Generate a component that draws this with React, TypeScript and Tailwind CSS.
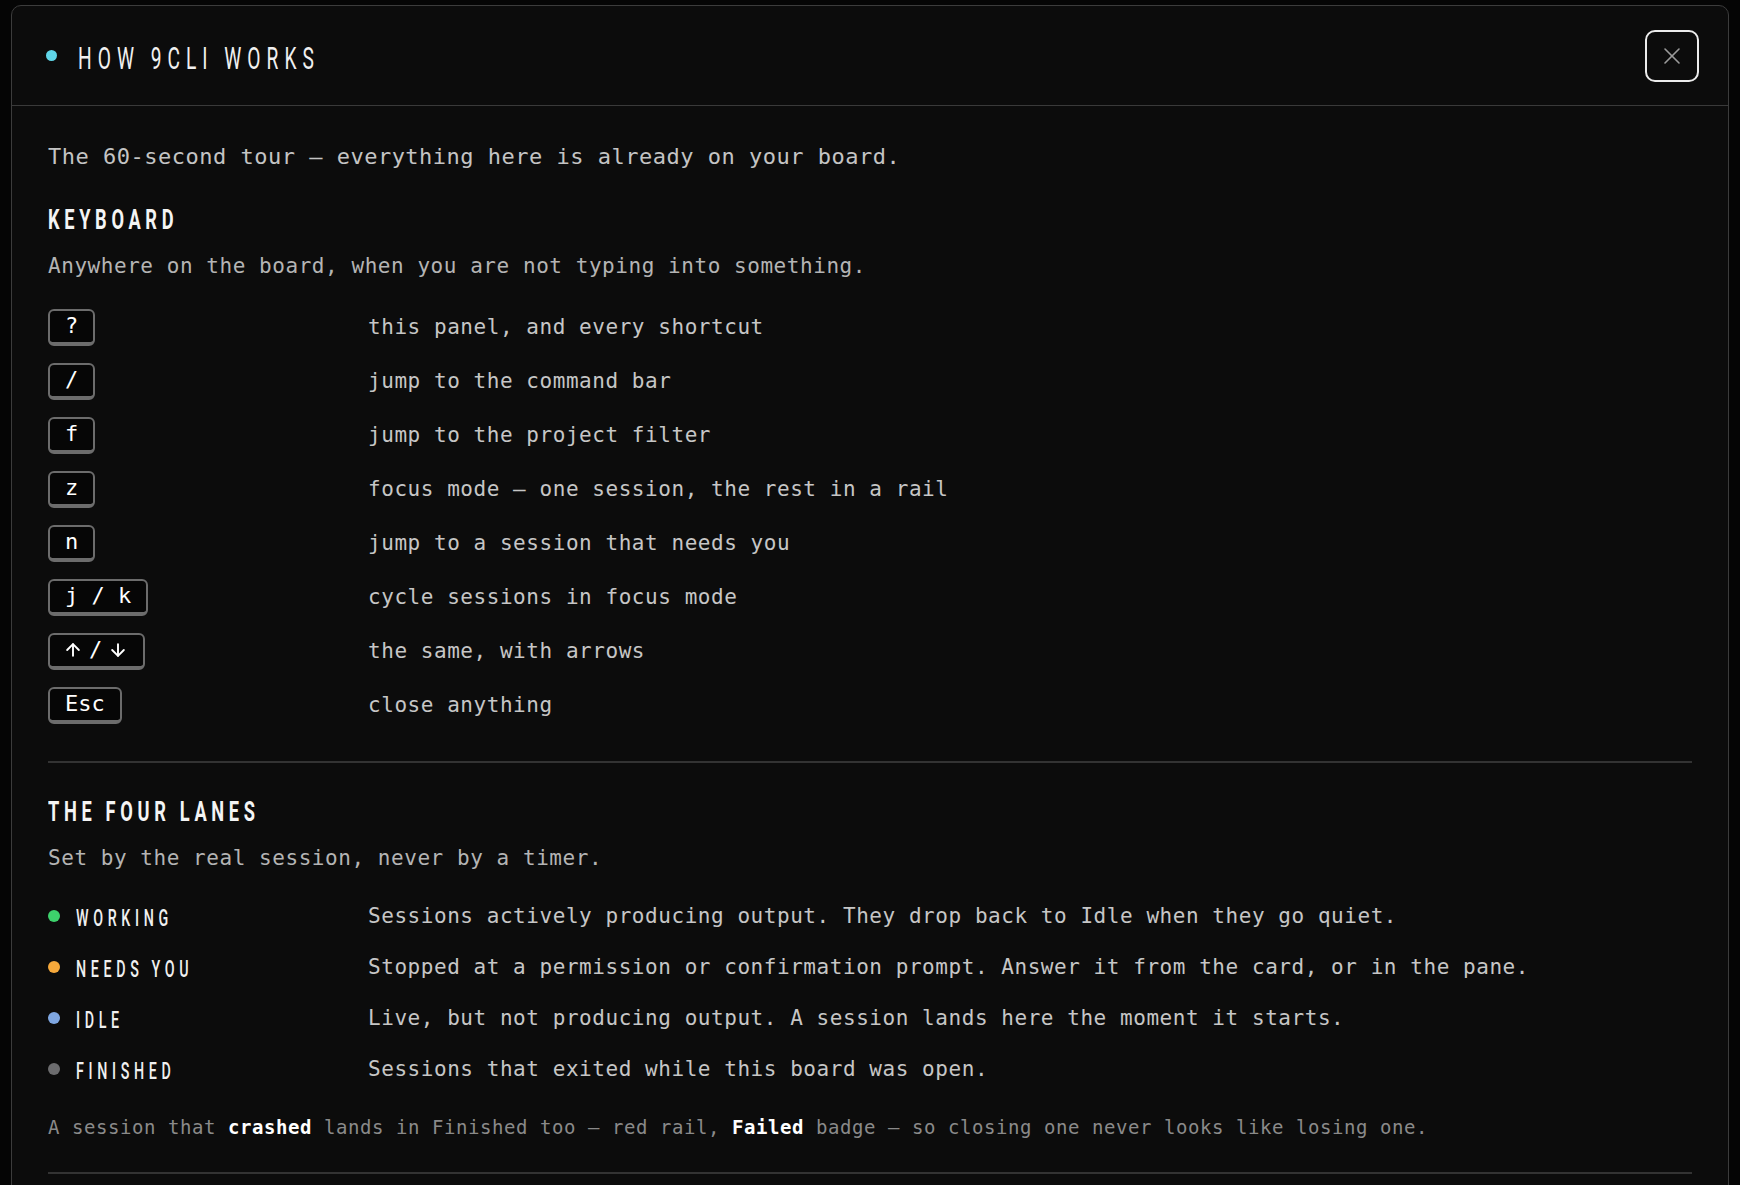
import React from 'react';
import { X, ArrowUp, ArrowDown } from 'lucide-react';

type Shortcut = { id: string; keys: React.ReactNode; desc: string };
type Lane = { label: string; dot: string; desc: string };

const shortcuts: Shortcut[] = [
  { id: 'q', keys: '?', desc: 'this panel, and every shortcut' },
  { id: 'slash', keys: '/', desc: 'jump to the command bar' },
  { id: 'f', keys: 'f', desc: 'jump to the project filter' },
  { id: 'z', keys: 'z', desc: 'focus mode — one session, the rest in a rail' },
  { id: 'n', keys: 'n', desc: 'jump to a session that needs you' },
  { id: 'jk', keys: 'j / k', desc: 'cycle sessions in focus mode' },
  {
    id: 'arrows',
    keys: (
      <span className="flex items-center">
        <ArrowUp size={20} strokeWidth={2.3} className="-ml-[2px]" />
        <span className="mx-[6px]">/</span>
        <ArrowDown size={20} strokeWidth={2.3} />
      </span>
    ),
    desc: 'the same, with arrows',
  },
  { id: 'esc', keys: 'Esc', desc: 'close anything' },
];

const lanes: Lane[] = [
  {
    label: 'WORKING',
    dot: 'bg-[#3dd26c]',
    desc: 'Sessions actively producing output. They drop back to Idle when they go quiet.',
  },
  {
    label: 'NEEDS YOU',
    dot: 'bg-[#f6a93b]',
    desc: 'Stopped at a permission or confirmation prompt. Answer it from the card, or in the pane.',
  },
  {
    label: 'IDLE',
    dot: 'bg-[#7fa7e2]',
    desc: 'Live, but not producing output. A session lands here the moment it starts.',
  },
  {
    label: 'FINISHED',
    dot: 'bg-[#6c6c6e]',
    desc: 'Sessions that exited while this board was open.',
  },
];

function SectionHead({ children }: { children: React.ReactNode }) {
  return (
    <h3 className="h-[28px] whitespace-nowrap font-['Roboto',sans-serif] text-[28px] leading-[28px] font-bold text-[#f4f4f4]">
      <span className="inline-block origin-left scale-x-[0.65] tracking-[7.2px]">{children}</span>
    </h3>
  );
}

function Key({ children }: { children: React.ReactNode }) {
  return (
    <kbd className="inline-flex h-[37px] items-center rounded-[6px] border-2 border-b-4 border-[#6c6c6c] bg-[#060606] px-[15px] font-['DejaVu_Sans_Mono','Liberation_Mono',monospace] text-[22px] leading-none font-medium text-white">
      {children}
    </kbd>
  );
}

export default function App() {
  return (
    <div className="h-[1185px] w-full overflow-hidden bg-[#050505] pt-[5px] px-[11px]">
      <div className="h-[1200px] rounded-t-[10px] border border-[#3c3c3c] bg-[#0c0c0c]">
        {/* header */}
        <div className="flex h-[100px] items-center justify-between border-b border-[#3a3a3a] pl-[34px] pr-[29px]">
          <div className="flex items-center">
            <span className="h-[11px] w-[11px] rounded-full bg-[#5fd5e8]" />
            <h2 className="ml-[21px] mt-[4px] whitespace-nowrap font-['Roboto',sans-serif] text-[32px] leading-[32px] font-normal text-[#f0f0f0]">
              <span className="inline-block origin-left scale-x-[0.6] tracking-[10px]">HOW 9CLI WORKS</span>
            </h2>
          </div>
          <button className="flex h-[52px] w-[54px] items-center justify-center rounded-[10px] border-2 border-[#ececec] bg-[#0c0c0c] text-[#9a9a9a]">
            <X size={28} strokeWidth={1.4} />
          </button>
        </div>

        {/* body */}
        <div className="px-[36px] pt-[37px] font-['DejaVu_Sans_Mono','Liberation_Mono',monospace]">
          <p className="h-[28px] text-[22px] leading-[28px] tracking-[0.5px] text-[#c4c4c4]">
            The 60-second tour — everything here is already on your board.
          </p>

          <div className="mt-[35px]">
            <SectionHead>KEYBOARD</SectionHead>
          </div>
          <p className="mt-[18px] h-[28px] text-[21px] leading-[28px] tracking-[0.55px] text-[#b4b4b4]">
            Anywhere on the board, when you are not typing into something.
          </p>

          <div className="mt-[20px]">
            {shortcuts.map((s) => (
              <div key={s.id} className="flex h-[54px] items-center">
                <div className="w-[320px] shrink-0">
                  <Key>{s.keys}</Key>
                </div>
                <span className="text-[21px] leading-[28px] tracking-[0.55px] text-[#c6c6c6]">{s.desc}</span>
              </div>
            ))}
          </div>

          <div className="mt-[29px] h-[2px] bg-[#333333]" />

          <div className="mt-[35px]">
            <SectionHead>THE FOUR LANES</SectionHead>
          </div>
          <p className="mt-[18px] h-[28px] text-[21px] leading-[28px] tracking-[0.55px] text-[#b4b4b4]">
            Set by the real session, never by a timer.
          </p>

          <div className="mt-[18px]">
            {lanes.map((l) => (
              <div key={l.label} className="flex h-[51px] items-center">
                <div className="flex w-[320px] shrink-0 items-center">
                  <span className={`h-[12px] w-[12px] rounded-full ${l.dot}`} />
                  <span className="ml-[16px] mt-[6px] whitespace-nowrap font-['Roboto',sans-serif] text-[23px] leading-[24px] font-medium text-[#f0f0f0]">
                    <span className="inline-block origin-left scale-x-[0.62] tracking-[7.5px]">{l.label}</span>
                  </span>
                </div>
                <span className="whitespace-nowrap text-[21px] leading-[28px] tracking-[0.55px] text-[#c6c6c6]">{l.desc}</span>
              </div>
            ))}
          </div>

          <p className="mt-[21px] h-[24px] whitespace-nowrap text-[19px] leading-[24px] tracking-[0.56px] text-[#8a8a8a]">
            A session that <b className="font-bold text-white">crashed</b> lands in Finished too — red rail,{' '}
            <b className="font-bold text-white">Failed</b> badge — so closing one never looks like losing one.
          </p>

          <div className="mt-[33px] h-[2px] bg-[#333333]" />
        </div>
      </div>
    </div>
  );
}
